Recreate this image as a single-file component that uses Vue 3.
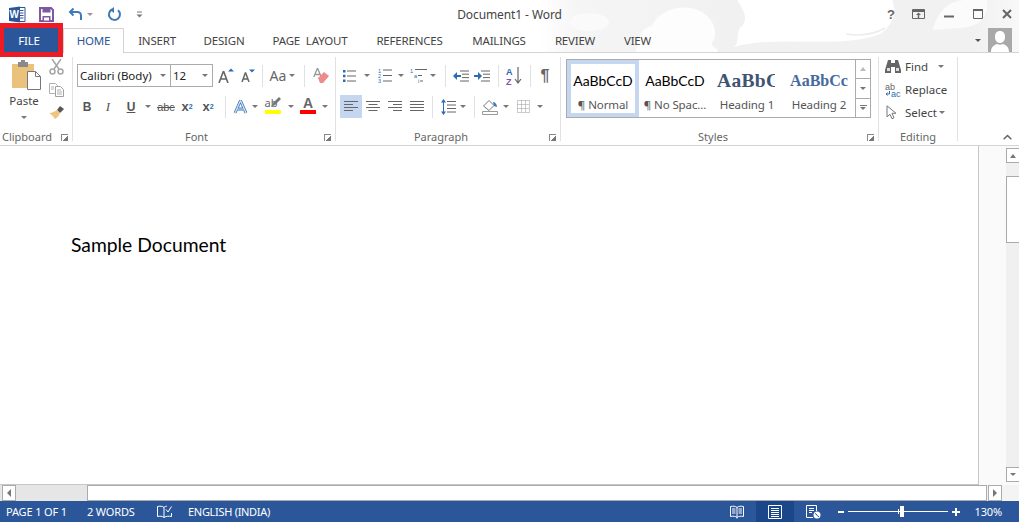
<script setup>
const tabs = [
  { name: 'INSERT', width: 66 },
  { name: 'DESIGN', width: 68 },
  { name: 'PAGE LAYOUT', width: 104 },
  { name: 'REFERENCES', width: 95 },
  { name: 'MAILINGS', width: 84 },
  { name: 'REVIEW', width: 68 },
  { name: 'VIEW', width: 57 }
]
const styleItems = [
  { preview: 'AaBbCcD', label: '¶ Normal', cls: 'is-active' },
  { preview: 'AaBbCcD', label: '¶ No Spac...', cls: '' },
  { preview: 'AaBbCc', label: 'Heading 1', cls: 'is-h1' },
  { preview: 'AaBbCc', label: 'Heading 2', cls: 'is-h2' }
]
</script>

<template>
  <div class="word">
    <header class="chrome">
      <svg class="clouds" width="479" height="52" viewBox="0 0 479 52">
        <defs>
          <linearGradient id="cloudBand" x1="0" x2="1" y1="0" y2="0">
            <stop offset="0" stop-color="#fff" />
            <stop offset="0.08" stop-color="#f5f5f5" />
            <stop offset="0.4" stop-color="#f1f1f1" />
            <stop offset="0.9" stop-color="#f1f1f1" />
            <stop offset="1" stop-color="#f8f8f8" />
          </linearGradient>
        </defs>
        <path d="M0 0h479v52H0z" fill="url(#cloudBand)" />
        <ellipse cx="49" cy="22" rx="20" ry="9" fill="#fafafa" />
        <path d="M96 52C98 40 100 28 112 26C116 14 134 5 150 8C166 10 177 24 175 36C173 44 168 44 176 48L178 52Z" fill="#fdfdfd" />
        <path d="M197 0C206 12 208 22 200 28C196 34 200 42 194 47C240 34 300 50 340 34C352 26 358 12 352 0Z" fill="#fff" />
        <path d="M306 34C320 36 335 34 345 28" fill="none" stroke="#ececec" stroke-width="1.500" />
        <path d="M393 30C396 14 408 0 425 0L447 0C450 14 440 28 420 28Z" fill="#fbfbfb" />
      </svg>

      <div class="titlebar">
        <div class="qat">
          <span class="cell w-word">
            <svg width="17" height="17" viewBox="0 0 17 17">
              <path d="M8 1.500h8v14H8z" fill="#fff" stroke="#2b579a" />
              <path d="M11 4.500h3.500M11 7h3.500M11 9.500h3.500M11 12h3.500" stroke="#2b579a" />
              <path d="M0 2l11-1.500v16L0 15z" fill="#2b579a" />
              <text x="5.200" y="12" class="word-w" text-anchor="middle">W</text>
            </svg>
          </span>
          <span class="cell w-save">
            <svg width="15" height="15" viewBox="0 0 15 15">
              <path d="M1 1h11l2 2v11H1z" fill="#fff" stroke="#7e58a3" stroke-width="2" />
              <path d="M3.500 1h8v4.500h-8zM3.500 9h8v5h-8z" fill="#7e58a3" />
              <path d="M5 10.500h5v3H5z" fill="#fff" />
            </svg>
          </span>
          <span class="cell w-undo">
            <svg width="15" height="14" viewBox="0 0 15 14">
              <path d="M5.500 1.500L2 5l3.500 3.500M2 5h7.500a3.500 3.500 0 0 1 3.500 3.500V13" fill="none" stroke="#3e7ab8" stroke-width="2" />
            </svg>
          </span>
          <span class="cell w-undo-caret"><i class="caret light"></i></span>
          <span class="cell w-redo">
            <svg width="15" height="15" viewBox="0 0 15 15">
              <path d="M5 2.500A5.500 5.500 0 1 0 11 3.200" fill="none" stroke="#3e7ab8" stroke-width="2" />
              <path d="M7 0v6L3 3z" fill="#3e7ab8" />
            </svg>
          </span>
          <span class="cell w-custom">
            <svg width="7" height="7" viewBox="0 0 7 7"><path d="M1 1h5" stroke="#777" /><path d="M0.500 3.500h6L3.500 6.500z" fill="#777" /></svg>
          </span>
        </div>
        <div class="doc-title">Document1 - Word</div>
        <div class="window-btns">
          <span class="help">?</span>
          <svg width="13" height="10" viewBox="0 0 13 10"><path d="M.5.500h12v9H.5z" fill="none" stroke="#666" /><path d="M.5 2h12" stroke="#666" stroke-width="2" /><path d="M6.500 3.500L9 6H7.200v3H5.800V6H4z" fill="#666" /></svg>
          <svg width="10" height="10" viewBox="0 0 10 10"><path d="M0 7.500h10" stroke="#666" stroke-width="2" /></svg>
          <svg width="10" height="10" viewBox="0 0 10 10"><path d="M.5 1.500h9v8h-9z" fill="none" stroke="#666" /><path d="M0 1h10" stroke="#666" stroke-width="2" /></svg>
          <svg width="10" height="10" viewBox="0 0 10 10"><path d="M1 1l8 8M9 1l-8 8" stroke="#666" stroke-width="2" /></svg>
        </div>
      </div>

      <nav class="tabbar">
        <div class="tab file">FILE</div>
        <div class="tab home">HOME</div>
        <div v-for="tab in tabs" :key="tab.name" class="tab" :style="{ width: tab.width + 'px' }">{{ tab.name }}</div>
        <div class="account">
          <i class="caret dark"></i>
          <svg class="avatar" width="24" height="24" viewBox="0 0 24 24">
            <path d="M0 0h24v24H0z" fill="#a9a9a9" />
            <path d="M12 3c3.500 0 5 2.500 5 6s-2 6-5 6-5-2.500-5-6 1.500-6 5-6zM3 24c0-5 3-7 6-8 2 1 4 1 6 0 3 1 6 3 6 8z" fill="#fff" />
          </svg>
        </div>
      </nav>
    </header>

    <section class="ribbon">
      <div class="group clipboard">
        <div class="group-body clip-body">
          <div class="paste">
            <svg width="29" height="31" viewBox="0 0 29 31">
              <path d="M0 4h22v24H0z" fill="#eac27c" />
              <path d="M6 2h10v5H6z" fill="#8a8a8a" />
              <path d="M9 0h4v3H9z" fill="#8a8a8a" />
              <path d="M15.500 11.500h8l5 5v13h-13z" fill="#fff" stroke="#777" />
              <path d="M23.500 11.500v5h5" fill="none" stroke="#777" />
            </svg>
            <span class="paste-label">Paste</span>
            <i class="caret"></i>
          </div>
          <div class="clip-tools">
            <svg width="15" height="16" viewBox="0 0 15 16">
              <path d="M3 0l7 10M12 0L5 10" stroke="#a6a6a6" stroke-width="1.500" />
              <circle cx="3.500" cy="12.500" r="2.500" fill="none" stroke="#a6a6a6" stroke-width="1.500" />
              <circle cx="11.500" cy="12.500" r="2.500" fill="none" stroke="#a6a6a6" stroke-width="1.500" />
            </svg>
            <svg width="15" height="14" viewBox="0 0 15 14">
              <path d="M.5.500h6l2 2v8h-8z" fill="#fff" stroke="#b0b0b0" />
              <path d="M6.500 3.500h5l3 3v7h-8z" fill="#fff" stroke="#a0a0a0" />
              <path d="M2 4h3M2 6h3M8 7h4M8 9h5M8 11h5" stroke="#b0b0b0" />
            </svg>
            <svg width="16" height="14" viewBox="0 0 16 14">
              <path d="M9 5l3-4 4 3-4 4z" fill="#555" />
              <path d="M1 8c3 0 6-2 8-3l3 3c-1 3-3 5-5 6-2-3-4-5-6-6z" fill="#eec57f" />
            </svg>
          </div>
        </div>
        <div class="group-label">Clipboard<i class="launcher"></i></div>
      </div>

      <div class="group font">
        <div class="group-body">
          <div class="row">
            <div class="select font-name">Calibri (Body)<i class="caret"></i></div>
            <div class="select font-size">12<i class="caret"></i></div>
            <span class="cell w26">
              <svg width="16" height="15" viewBox="0 0 16 15"><path d="M5.500 3L1 15M5.500 3l4.500 12M2.500 11h6" fill="none" stroke="#666" stroke-width="1.600" /><path d="M10 3.500L13 .5l3 3z" fill="#2b6cb0" /></svg>
            </span>
            <span class="cell w18">
              <svg width="14" height="13" viewBox="0 0 14 13"><path d="M4.500 3.500L1 13M4.500 3.500L8 13M2.200 10h4.600" fill="none" stroke="#666" stroke-width="1.500" /><path d="M8 .5h6l-3 3z" fill="#2b6cb0" /></svg>
            </span>
            <span class="cell w10"><i class="sep"></i></span>
            <span class="cell w22 aa">Aa</span>
            <span class="cell w6"><i class="caret"></i></span>
            <span class="cell w18"><i class="sep"></i></span>
            <span class="cell w16">
              <svg width="16" height="15" viewBox="0 0 16 15">
                <path d="M4.500 0L.8 9M4.500 0l3.700 9M2 6.500h5" fill="none" stroke="#999" stroke-width="1.300" />
                <path d="M5 10l6-6 5 4-6 7H7z" fill="#ef8b8b" />
              </svg>
            </span>
          </div>
          <div class="row">
            <span class="cell w22 fmt bold">B</span>
            <span class="cell w20 fmt italic">I</span>
            <span class="cell w26 fmt under">U</span>
            <span class="cell w8"><i class="caret"></i></span>
            <span class="cell w28 fmt strike">abc</span>
            <span class="cell w14 fmt bold sc">x<sub>2</sub></span>
            <span class="cell w28 fmt bold sc">x<sup>2</sup></span>
            <span class="cell w6"><i class="sep"></i></span>
            <span class="cell w24">
              <svg width="15" height="15" viewBox="0 0 15 15">
                <path d="M7.500 1.500L2 14M7.500 1.500l5.500 12.500M4 10h7" fill="none" stroke="#3e7ab8" stroke-width="2.800" />
                <path d="M7.500 1.500L2 14M7.500 1.500l5.500 12.500M4 10h7" fill="none" stroke="#d5e4f5" stroke-width="1.200" />
              </svg>
            </span>
            <span class="cell w6"><i class="caret"></i></span>
            <span class="cell w30 pen">
              <span class="pen-text">ab</span>
              <svg class="pen-tip" width="10" height="11" viewBox="0 0 10 11"><path d="M0 10l2-4 6-6 2 2-6 6z" fill="#777" /></svg>
              <i class="pen-bar yellow"></i>
            </span>
            <span class="cell w6"><i class="caret"></i></span>
            <span class="cell w28 pen">
              <span class="font-color">A</span>
              <i class="pen-bar red"></i>
            </span>
            <span class="cell w6"><i class="caret"></i></span>
          </div>
        </div>
        <div class="group-label">Font<i class="launcher"></i></div>
      </div>

      <div class="group paragraph">
        <div class="group-body">
          <div class="row">
            <span class="cell w20">
              <svg width="14" height="14" viewBox="0 0 14 14"><path d="M4 2h9M4 7h9M4 12h9" stroke="#666" /><path d="M0 1h2.500v2.500H0zM0 5.800h2.500v2.500H0zM0 10.500h2.500V13H0z" fill="#2b6cb0" /></svg>
            </span>
            <span class="cell w14"><i class="caret"></i></span>
            <span class="cell w22">
              <svg width="14" height="15" viewBox="0 0 14 15"><path d="M5 2h9M5 7.500h9M5 13h9" stroke="#666" /><text x="0" y="4.500" class="mini">1</text><text x="0" y="10" class="mini">2</text><text x="0" y="15" class="mini">3</text></svg>
            </span>
            <span class="cell w10"><i class="caret"></i></span>
            <span class="cell w24">
              <svg width="17" height="15" viewBox="0 0 17 15"><path d="M5 1.500h12M8 7.500h4M10 13h3" stroke="#666" /><text x="0" y="5" class="mini">1</text><text x="4" y="10" class="mini">a</text><text x="8" y="15" class="mini">i</text></svg>
            </span>
            <span class="cell w6"><i class="caret"></i></span>
            <span class="cell w18"><i class="sep"></i></span>
            <span class="cell w14">
              <svg width="16" height="12" viewBox="0 0 16 12"><path d="M7 1h9M9 4.200h7M9 7.600h7M7 11h9" stroke="#666" /><path d="M0 6l4-4v3h4v2H4v3z" fill="#2b6cb0" /></svg>
            </span>
            <span class="cell w28">
              <svg width="16" height="12" viewBox="0 0 16 12"><path d="M7 1h9M9 4.200h7M9 7.600h7M7 11h9" stroke="#666" /><path d="M8 6L4 2v3H0v2h4v3z" fill="#2b6cb0" /></svg>
            </span>
            <span class="cell w4"><i class="sep"></i></span>
            <span class="cell w28">
              <svg width="16" height="18" viewBox="0 0 16 18">
                <text x="0" y="8" class="sort a">A</text>
                <text x="0" y="17.500" class="sort z">Z</text>
                <path d="M12 0v15M9 12l3 4 3-4" fill="none" stroke="#666" stroke-width="1.200" />
              </svg>
            </span>
            <span class="cell w4"><i class="sep"></i></span>
            <span class="cell w26 pilcrow">¶</span>
          </div>
          <div class="row">
            <span class="cell w22 align-btn is-on">
              <svg width="14" height="11" viewBox="0 0 14 11"><path d="M0 .5h14M0 3.500h9M0 6.500h14M0 9.500h9" stroke="#666" /></svg>
            </span>
            <span class="cell w22">
              <svg width="14" height="11" viewBox="0 0 14 11"><path d="M0 .5h14M2.500 3.500h9M0 6.500h14M2.500 9.500h9" stroke="#666" /></svg>
            </span>
            <span class="cell w22">
              <svg width="14" height="11" viewBox="0 0 14 11"><path d="M0 .5h14M5 3.500h9M0 6.500h14M5 9.500h9" stroke="#666" /></svg>
            </span>
            <span class="cell w22">
              <svg width="14" height="11" viewBox="0 0 14 11"><path d="M0 .5h14M0 3.500h14M0 6.500h14M0 9.500h14" stroke="#666" /></svg>
            </span>
            <span class="cell w8"><i class="sep"></i></span>
            <span class="cell w24">
              <svg width="15" height="16" viewBox="0 0 15 16"><path d="M6 2.500h9M6 6h9M6 9.500h9M6 13h9" stroke="#666" /><path d="M2.500 3v10" stroke="#2b6cb0" /><path d="M2.500 0L5 3.500H0zM2.500 16L5 12.500H0z" fill="#2b6cb0" /></svg>
            </span>
            <span class="cell w6"><i class="caret"></i></span>
            <span class="cell w16"><i class="sep"></i></span>
            <span class="cell w16">
              <svg width="16" height="16" viewBox="0 0 16 16">
                <path d="M1.500 7L7 1.500l5 5L7 11.500z" fill="#fff" stroke="#777" />
                <path d="M11 3c2 0 4 2 4 5l-3-1z" fill="#3e7ab8" />
                <path d="M.5 12.500h15v3H.5z" fill="#fff" stroke="#999" />
              </svg>
            </span>
            <span class="cell w16"><i class="caret"></i></span>
            <span class="cell w18">
              <svg width="13" height="13" viewBox="0 0 13 13"><path d="M.5.500h12v12H.5zM.5 4.500h12M.5 8.500h12M4.500.5v12M8.500.5v12" fill="none" stroke="#999" stroke-dasharray="1 1" /></svg>
            </span>
            <span class="cell w16"><i class="caret"></i></span>
          </div>
        </div>
        <div class="group-label">Paragraph<i class="launcher"></i></div>
      </div>

      <div class="group styles">
        <div class="group-body">
          <div class="gallery">
            <div v-for="item in styleItems" :key="item.label" class="style-item" :class="item.cls">
              <span class="style-preview">{{ item.preview }}</span>
              <span class="style-label">{{ item.label }}</span>
            </div>
            <div class="gallery-btns">
              <span class="gallery-btn"><i class="caret up light"></i></span>
              <span class="gallery-btn"><i class="caret"></i></span>
              <span class="gallery-btn more"><i class="more-line"></i><i class="caret"></i></span>
            </div>
          </div>
        </div>
        <div class="group-label">Styles<i class="launcher"></i></div>
      </div>

      <div class="group editing">
        <div class="group-body edit-body">
          <div class="edit-row">
            <svg width="16" height="13" viewBox="0 0 16 13">
              <path d="M3 0h3v3h4V0h3l3 10v3h-6V7H6v6H0v-3z" fill="#666" />
              <path d="M2 8h3v3H2zM11 8h3v3h-3z" fill="#ddd" />
            </svg>
            <span class="edit-text find">Find</span><i class="caret"></i>
          </div>
          <div class="edit-row">
            <svg width="16" height="16" viewBox="0 0 16 16">
              <text x="0" y="7.500" class="rep ab">ab</text>
              <text x="6" y="14.500" class="rep ac">ac</text>
              <path d="M4.500 9v3H1M2.500 10.500L1 12l1.500 1.500" fill="none" stroke="#2b6cb0" />
            </svg>
            <span class="edit-text">Replace</span>
          </div>
          <div class="edit-row">
            <svg class="cursor" width="11" height="15" viewBox="0 0 11 15"><path d="M1 .8v11l3-2.500 2 4.500 2-1-2-4.500h4z" fill="#fff" stroke="#777" /></svg>
            <span class="edit-text select-text">Select</span><i class="caret"></i>
          </div>
        </div>
        <div class="group-label">Editing</div>
      </div>

      <svg class="collapse" width="9" height="6" viewBox="0 0 9 6"><path d="M.7 5.300L4.500 1.500l3.800 3.800" fill="none" stroke="#666" stroke-width="1.500" /></svg>
    </section>

    <main class="workspace">
      <div class="page">
        <p class="page-text">Sample Document</p>
      </div>
      <aside class="vscroll">
        <div class="vtrack">
          <span class="sbtn"><i class="caret up"></i></span>
          <span class="vthumb"></span>
          <span class="sbtn"><i class="caret"></i></span>
        </div>
      </aside>
    </main>

    <div class="hscroll">
      <span class="sbtn h"><i class="tri left"></i></span>
      <span class="hthumb"></span>
      <span class="sbtn h"><i class="tri right"></i></span>
    </div>

    <footer class="status">
      <span class="st page-no">PAGE 1 OF 1</span>
      <span class="st words">2 WORDS</span>
      <svg class="proof" width="15" height="14" viewBox="0 0 15 14" fill="none" stroke="#fff">
        <path d="M7 2.500C5.500 1 3 1 .5 1.500v10C3 11 5.500 11 7 12.500V2.500zM7 2.500C8 1.500 9 1.300 10 1.200M7 12.500C9 11 12 11 14.500 11.500V8" />
        <path d="M9 4.500l2 2.500 3.500-5.500" />
      </svg>
      <span class="st lang">ENGLISH (INDIA)</span>
      <div class="status-right">
        <svg width="14" height="14" viewBox="0 0 14 14" fill="none" stroke="#fff"><path d="M.5 1.500C3 1 5.500 1 7 2.500c1.500-1.500 4-1.500 6.500-1v10c-2.500-.5-5-.5-6.500 1-1.500-1.500-4-1.500-6.500-1z" /><path d="M7 2.500v11M2 4h3.500M2 6h3.500M2 8h3.500M8.500 4H12M8.500 6H12M8.500 8H12" /></svg>
        <span class="view-active">
          <svg width="14" height="14" viewBox="0 0 14 14" fill="none" stroke="#fff"><path d="M.5.500h13v13H.5zM3 3.500h8M3 5.500h8M3 7.500h8M3 9.500h8M3 11.500h8" /></svg>
        </span>
        <svg class="web" width="15" height="14" viewBox="0 0 15 14" fill="none" stroke="#fff">
          <path d="M7 12.500H.5V.5h10V6M3 3.500h5M3 5.500h5M3 7.500h3" />
          <circle cx="11" cy="10" r="3.500" fill="#fff" stroke="none" />
          <path d="M9 8.500c2 0 2 3.500 4 3" stroke="#2b579a" />
        </svg>
        <span class="zoom-minus"></span>
        <div class="slider"><i class="slider-mark"></i><i class="slider-thumb"></i></div>
        <span class="zoom-plus"></span>
        <span class="st zoom-value">130%</span>
      </div>
    </footer>
  </div>
</template>

<style>
html,
body {
  margin: 0;
  overflow: hidden;
  background: #fff;
}
</style>

<style scoped>
.word {
  width: 1019px;
  height: 522px;
  display: flex;
  flex-direction: column;
  overflow: hidden;
  background: #fff;
  color: #444;
  font-family: "Noto Sans", "Open Sans", sans-serif;
}

/* title bar and tabs */
.chrome {
  position: relative;
  height: 53px;
  flex: none;
}
.clouds {
  position: absolute;
  left: 540px;
  top: 0;
}
.titlebar {
  position: relative;
  height: 28px;
  display: grid;
  grid-template-columns: 1fr auto 1fr;
  align-items: center;
}
.qat {
  display: flex;
  align-items: center;
  padding-left: 3px;
}
.word-w {
  fill: #fff;
  font: bold 10px "Liberation Sans", sans-serif;
}
.doc-title {
  font-size: 12px;
  letter-spacing: -0.1px;
  color: #444;
}
.window-btns {
  display: flex;
  justify-content: flex-end;
  align-items: center;
  gap: 19px;
  padding-right: 7px;
}
.help {
  font: bold 13px "Liberation Sans", sans-serif;
  color: #666;
  margin-right: -2px;
}
.tabbar {
  position: relative;
  height: 25px;
  display: flex;
  border-bottom: 1px solid #d4d4d4;
  box-sizing: border-box;
}
.tab {
  height: 24px;
  line-height: 25px;
  font-size: 11.5px;
  letter-spacing: -0.2px;
  word-spacing: 3px;
  text-align: center;
  color: #444;
  flex: none;
  box-sizing: border-box;
}
.tab.file {
  position: relative;
  width: 63px;
  padding-right: 5px;
  background: #2b579a;
  color: #fff;
}
.tab.file::after {
  content: "";
  position: absolute;
  left: 0;
  top: -5px;
  width: 63px;
  height: 34px;
  box-sizing: border-box;
  border: solid #ed1c24;
  border-width: 5px 5px 5px 4px;
}
.tab.home {
  width: 61px;
  height: 25px;
  background: #fff;
  border: 1px solid #d4d4d4;
  border-bottom: none;
  color: #2b579a;
  line-height: 23px;
}
.account {
  margin-left: auto;
  display: flex;
  align-items: center;
  gap: 7px;
  padding-right: 7px;
  height: 24px;
}
.avatar {
  display: block;
}

/* ribbon */
.ribbon {
  height: 93px;
  flex: none;
  display: flex;
  align-items: flex-start;
  box-sizing: border-box;
  padding-top: 4px;
  border-bottom: 1px solid #d4d4d4;
}
.group {
  position: relative;
  height: 84px;
  display: flex;
  flex-direction: column;
  box-sizing: border-box;
  border-right: 1px solid #e1e1e1;
  flex: none;
}
.group.clipboard { width: 73px; }
.group.font { width: 263px; padding-left: 3px; }
.group.paragraph { width: 225px; padding-left: 4px; }
.group.styles { width: 318px; padding-left: 5px; }
.group.editing { width: 79px; }
.group-body {
  flex: 1;
  min-height: 0;
  padding-top: 7px;
  display: flex;
  flex-direction: column;
  gap: 8px;
}
.group-label {
  height: 14px;
  margin-bottom: -3px;
  line-height: 14px;
  font-size: 11px;
  text-align: center;
  color: #666;
  padding-right: 18px;
}
.group.editing .group-label {
  padding-right: 0;
}
.launcher {
  position: absolute;
  right: 4px;
  bottom: 0;
  width: 7px;
  height: 7px;
  box-sizing: border-box;
  border-left: 1px solid #888;
  border-top: 1px solid #888;
  background: linear-gradient(135deg, transparent 55%, #777 55%);
}
.row {
  height: 23px;
  display: flex;
  align-items: center;
}
.group.font .row:first-child { margin-left: 1px; }
.cell {
  display: flex;
  align-items: center;
  justify-content: center;
  flex: none;
  height: 23px;
}
.cell svg {
  flex: none;
}
.w-word { width: 28px; }
.w-save { width: 30px; }
.w-undo { width: 28px; }
.w-undo-caret { width: 2px; }
.w-redo { width: 46px; }
.w-custom { width: 4px; }
.w4 { width: 4px; }
.w6 { width: 6px; }
.w8 { width: 8px; }
.w10 { width: 10px; }
.w14 { width: 14px; }
.w16 { width: 16px; }
.w18 { width: 18px; }
.w20 { width: 20px; }
.w22 { width: 22px; }
.w24 { width: 24px; }
.w26 { width: 26px; }
.w28 { width: 28px; }
.w30 { width: 30px; }
.caret {
  display: inline-block;
  flex: none;
  width: 0;
  height: 0;
  border-left: 3px solid transparent;
  border-right: 3px solid transparent;
  border-top: 3px solid #777;
}
.caret.light { border-top-color: #999; }
.caret.dark { border-top-color: #555; }
.caret.up {
  border-top: none;
  border-bottom: 4px solid #777;
}
.caret.up.light { border-bottom-color: #bbb; }
.sep {
  display: block;
  width: 1px;
  height: 22px;
  background: #e1e1e1;
}
.clip-body {
  flex-direction: row;
  padding-top: 2px;
  gap: 0;
}
.paste {
  width: 48px;
  display: flex;
  flex-direction: column;
  align-items: center;
}
.paste svg {
  margin-left: 4px;
  margin-top: 1px;
}
.paste-label {
  margin-top: 2px;
  font-size: 11.5px;
  line-height: 16px;
  color: #444;
}
.paste .caret {
  margin-top: 7px;
}
.clip-tools {
  display: flex;
  flex-direction: column;
  align-items: center;
  gap: 8px;
  width: 16px;
}
.select {
  height: 23px;
  box-sizing: border-box;
  display: flex;
  align-items: center;
  justify-content: space-between;
  border: 1px solid #ababab;
  background: #fff;
  color: #222;
  font-size: 11.5px;
  padding: 0 4px 0 2px;
  flex: none;
}
.font-name { width: 94px; }
.font-size { width: 43px; margin-left: -1px; }
.aa {
  font-size: 14px;
  color: #666;
}
.fmt {
  font-family: "Liberation Sans", sans-serif;
  font-size: 12px;
  color: #555;
}
.bold { font-weight: bold; }
.italic {
  font-family: "Liberation Serif", serif;
  font-style: italic;
  font-size: 13px;
}
.under {
  font-weight: bold;
  text-decoration: underline;
}
.strike {
  text-decoration: line-through;
  font-size: 11px;
}
.sc {
  font-size: 13px;
}
.sc sub,
.sc sup {
  font-size: 7px;
  color: #2b6cb0;
}
.pen {
  position: relative;
}
.pen-text {
  font-size: 11px;
  color: #666;
  line-height: 11px;
  margin-top: -8px;
}
.pen-tip {
  margin-top: -8px;
  margin-left: -6px;
}
.font-color {
  font: bold 14px "Liberation Sans", sans-serif;
  color: #666;
  margin-top: -8px;
}
.pen-bar {
  position: absolute;
  left: 50%;
  bottom: 4px;
  width: 16px;
  height: 4px;
  margin-left: -8px;
}
.pen-bar.yellow { background: #ffff00; }
.pen-bar.red { background: #ff0000; }
.mini {
  font: 5.500px "Liberation Sans", sans-serif;
  fill: #2b6cb0;
}
.sort {
  font: bold 9px "Liberation Sans", sans-serif;
}
.sort.a { fill: #2b6cb0; }
.sort.z { fill: #8a4fb0; }
.pilcrow {
  font: bold 16px "Liberation Sans", sans-serif;
  color: #666;
}
.align-btn.is-on {
  background: #c5d6f0;
}
.gallery {
  display: flex;
  width: 305px;
  height: 59px;
  box-sizing: border-box;
  margin-top: -5px;
  border: 1px solid #ababab;
  background: #fff;
}
.style-item {
  width: 72px;
  flex: none;
  box-sizing: border-box;
  border: 4px solid transparent;
  display: flex;
  flex-direction: column;
  align-items: center;
  overflow: hidden;
}
.style-item.is-active {
  border-color: #c5d6f0;
}
.style-preview {
  height: 33px;
  line-height: 33px;
  width: 100%;
  box-sizing: border-box;
  text-align: center;
  font-family: Lato, sans-serif;
  font-size: 14px;
  color: #000;
  white-space: nowrap;
  overflow: hidden;
}
.style-label {
  font-size: 11.5px;
  line-height: 16px;
  color: #555;
  white-space: nowrap;
  letter-spacing: -0.1px;
}
.is-h1 .style-preview {
  width: 60px;
  align-self: flex-start;
  font: bold 19.5px/33px "Liberation Serif", serif;
  letter-spacing: 0.3px;
  color: #3f5373;
  text-align: left;
  padding-left: 2px;
}
.is-h2 .style-preview {
  font: bold 16px/33px "Liberation Serif", serif;
  color: #466a9e;
}
.gallery-btns {
  margin-left: auto;
  width: 15px;
  display: flex;
  flex-direction: column;
  border-left: 1px solid #ababab;
}
.gallery-btn {
  flex: 1;
  display: flex;
  flex-direction: column;
  gap: 1px;
  align-items: center;
  justify-content: center;
}
.gallery-btn + .gallery-btn {
  border-top: 1px solid #ababab;
}
.more-line {
  width: 7px;
  height: 1px;
  background: #777;
}
.edit-body {
  gap: 0;
  padding-top: 0;
  margin-top: -2px;
  padding-left: 6px;
}
.edit-row {
  height: 23px;
  display: flex;
  align-items: center;
  gap: 4px;
}
.edit-text {
  font-size: 11.5px;
  color: #444;
}
.edit-text.find { margin-right: 6px; }
.edit-row .cursor { margin: 0 4px 0 1px; }
.edit-text.select-text { margin-right: -2px; }
.rep {
  font: 9px "Liberation Sans", sans-serif;
}
.rep.ab { fill: #666; }
.rep.ac { fill: #2b6cb0; }
.collapse {
  margin-left: auto;
  margin-right: 7px;
  margin-top: 77px;
}

/* document area */
.workspace {
  height: 339px;
  flex: none;
  display: flex;
}
.page {
  width: 979px;
  box-sizing: border-box;
  border-right: 1px solid #c6c6c6;
  border-bottom: 1px solid #c6c6c6;
  padding: 88px 0 0 71px;
}
.page-text {
  margin: 0;
  font-family: Lato, sans-serif;
  font-size: 19.3px;
  line-height: 22px;
  color: #000;
}
.vscroll {
  flex: 1;
  display: flex;
  justify-content: flex-end;
  background: #fafafa;
}
.vtrack {
  width: 13px;
  margin-top: 2px;
  margin-bottom: 3px;
  display: flex;
  flex-direction: column;
  background: #f0f0f0;
}
.sbtn {
  height: 15px;
  flex: none;
  box-sizing: border-box;
  border: 1px solid #ababab;
  border-right: none;
  background: #fff;
  display: flex;
  align-items: center;
  justify-content: center;
}
.vthumb {
  height: 67px;
  margin-top: 13px;
  margin-bottom: auto;
  box-sizing: border-box;
  border: 1px solid #ababab;
  border-right: none;
  background: #fff;
}
.hscroll {
  height: 16px;
  flex: none;
  display: flex;
  background: linear-gradient(to right, #e6e6e6 88px, #f4f4f4 88px);
  padding-left: 2px;
}
.sbtn.h {
  width: 14px;
  height: 16px;
  border: 1px solid #ababab;
}
.hthumb {
  width: 900px;
  margin-left: 71px;
  margin-right: 1px;
  box-sizing: border-box;
  border: 1px solid #ababab;
  background: #fff;
}
.tri {
  width: 0;
  height: 0;
  border-top: 4px solid transparent;
  border-bottom: 4px solid transparent;
}
.tri.left { border-right: 4px solid #777; }
.tri.right { border-left: 4px solid #777; }

/* status bar */
.status {
  flex: 1;
  display: flex;
  align-items: center;
  background: #2b579a;
  color: #fff;
  padding-left: 6px;
}
.st {
  font-size: 11px;
  letter-spacing: -0.15px;
  white-space: nowrap;
}
.page-no { width: 81px; }
.words { width: 70px; }
.lang {
  margin-left: 16px;
  letter-spacing: -0.3px;
}
.status-right {
  margin-left: auto;
  display: flex;
  align-items: center;
  height: 100%;
}
.view-active {
  width: 38px;
  height: 100%;
  margin-left: 12px;
  margin-right: 12px;
  display: flex;
  align-items: center;
  justify-content: center;
  background: #19478a;
}
.zoom-minus,
.zoom-plus {
  position: relative;
  width: 6px;
  height: 2px;
  background: #fff;
  flex: none;
}
.zoom-minus { margin-left: 17px; }
.zoom-plus {
  width: 8px;
  margin-left: 4px;
}
.zoom-plus::after {
  content: "";
  position: absolute;
  left: 3px;
  top: -3px;
  width: 2px;
  height: 8px;
  background: #fff;
}
.slider {
  position: relative;
  width: 100px;
  height: 1px;
  margin-left: 4px;
  background: #fff;
}
.slider-mark {
  position: absolute;
  left: 50px;
  top: -2px;
  width: 1px;
  height: 5px;
  background: #fff;
}
.slider-thumb {
  position: absolute;
  left: 52px;
  top: -5px;
  width: 4px;
  height: 11px;
  background: #fff;
}
.zoom-value {
  margin-left: 15px;
  margin-right: 17px;
}
</style>
